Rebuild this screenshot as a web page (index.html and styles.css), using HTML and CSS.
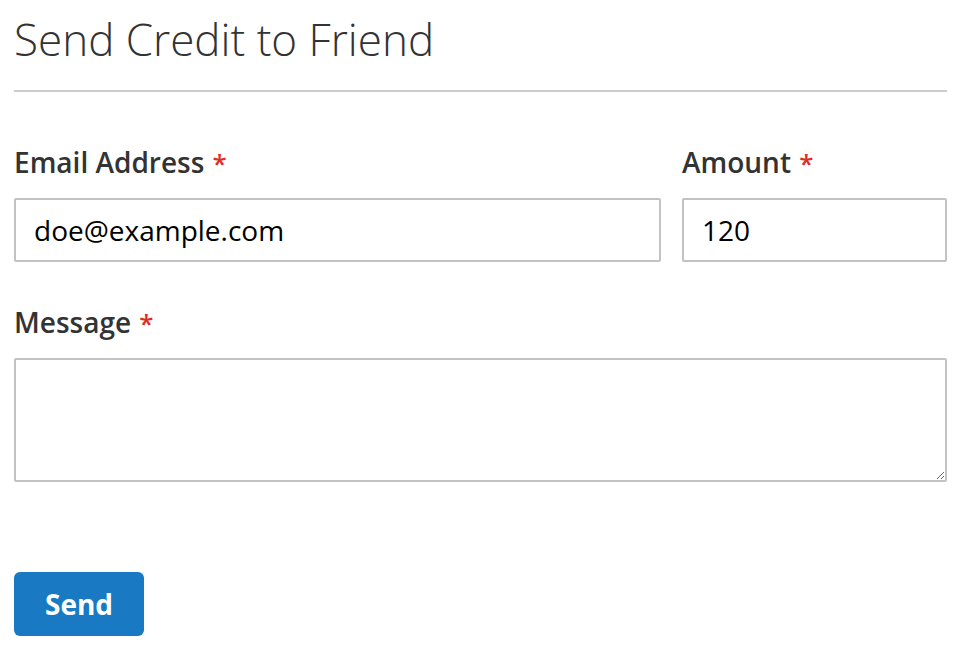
FILE: index.html
```html
<!DOCTYPE html>
<html>
<head>
<meta charset="utf-8">
<link rel="stylesheet" href="styles.css">
</head>
<body>
<div class="page">
  <div class="title-wrap">
    <h1 class="title">Send Credit to Friend</h1>
  </div>
  <form class="form">
    <div class="row">
      <div class="field">
        <label class="label">Email Address <span class="req">*</span></label>
        <input class="input" type="text" value="doe@example.com">
      </div>
      <div class="field">
        <label class="label">Amount <span class="req">*</span></label>
        <input class="input" type="text" value="120">
      </div>
    </div>
    <div class="field field-msg">
      <label class="label">Message <span class="req">*</span></label>
      <textarea class="textarea"></textarea>
    </div>
    <div class="actions">
      <button type="button" class="btn">Send</button>
    </div>
  </form>
</div>
</body>
</html>
```
FILE: styles.css
```css
html, body {
  margin: 0;
  padding: 0;
  background: #fff;
}
body {
  font-family: "Open Sans", "Liberation Sans", sans-serif;
  color: #333;
}
.page {
  width: 933px;
  margin-left: 14px;
}
.title-wrap {
  border-bottom: 2px solid #cccccc;
  height: 92px;
  box-sizing: border-box;
  padding-top: 13px;
}
.title {
  margin: 0;
  font-size: 44px;
  font-weight: 300;
  line-height: 1.2;
  color: #333;
}
.form {
  padding-top: 52px;
}
.row {
  display: grid;
  grid-template-columns: 647px 265px;
  column-gap: 21px;
}
.field {
  display: flex;
  flex-direction: column;
}
.label {
  font-size: 28px;
  font-weight: 600;
  line-height: 36px;
  color: #333;
  margin-bottom: 17px;
}
.req {
  color: #e02b27;
  font-size: 26px;
  margin-left: 1px;
}
.input {
  box-sizing: border-box;
  height: 64px;
  border: 2px solid #c2c2c2;
  border-radius: 2px;
  padding: 0 18px;
  font-family: "Open Sans", "Liberation Sans", sans-serif;
  font-size: 28px;
  color: #000;
  background: #fff;
  outline: none;
}
.field-msg {
  margin-top: 42px;
}
.textarea {
  box-sizing: border-box;
  height: 124px;
  border: 2px solid #c2c2c2;
  border-radius: 2px;
  font-family: "Open Sans", "Liberation Sans", sans-serif;
  font-size: 28px;
  background: #fff;
  resize: vertical;
}
.actions {
  margin-top: 90px;
}
.btn {
  width: 130px;
  height: 64px;
  background: #1979c3;
  border: none;
  border-radius: 6px;
  color: #fff;
  font-family: "Open Sans", "Liberation Sans", sans-serif;
  font-size: 28px;
  font-weight: 700;
  padding: 0;
}
```
